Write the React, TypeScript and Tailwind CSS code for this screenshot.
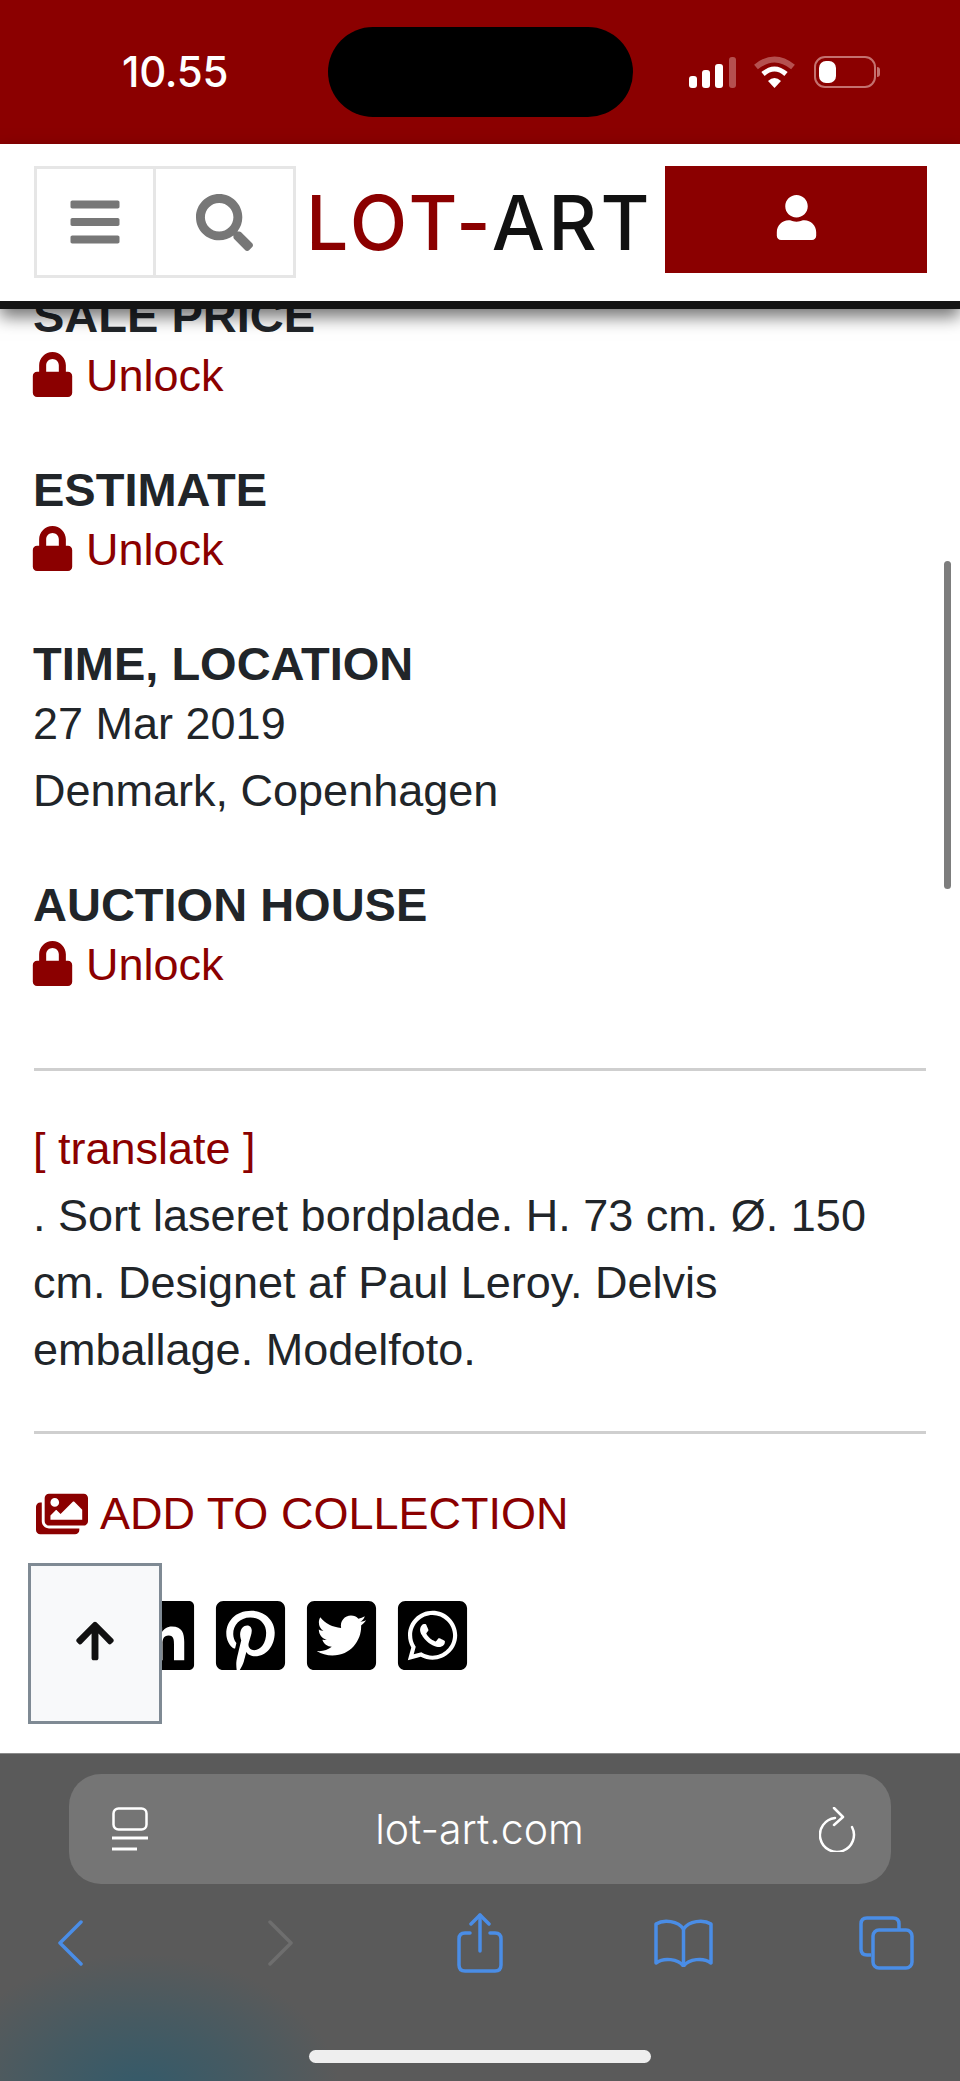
import {
  FaArrowUp,
  FaBars,
  FaFacebookSquare,
  FaImages,
  FaLinkedin,
  FaLock,
  FaPinterestSquare,
  FaSearch,
  FaTwitterSquare,
  FaUser,
  FaWhatsappSquare,
} from "react-icons/fa";

function StatusIcons() {
  return (
    <div className="flex items-center">
      <svg width="47" height="31" viewBox="0 0 47 31" className="block">
        <rect x="0" y="19" width="8" height="12" rx="3" fill="#fff" />
        <rect x="13" y="13" width="8" height="18" rx="3" fill="#fff" />
        <rect x="26" y="7" width="8" height="24" rx="3" fill="#fff" />
        <rect x="40" y="0" width="7" height="31" rx="3" fill="#b5504f" />
      </svg>
      <svg width="41" height="32" viewBox="0 0 41 32" className="ml-[18px] block">
        <path d="M2 11 Q20.5 -4 39 11" fill="none" stroke="#b5504f" strokeWidth="6" />
        <path d="M9 18 Q20.5 8 32 18" fill="none" stroke="#fff" strokeWidth="5" />
        <path d="M14 25 L20.5 32 L27 25 Q20.5 19 14 25 Z" fill="#fff" />
      </svg>
      <div className="ml-[19px] flex items-center">
        <div className="h-[32px] w-[62px] rounded-[11px] border-2 border-[#c4716f] p-[3px]">
          <div className="h-full w-[17px] rounded-[7px] bg-white" />
        </div>
        <div className="ml-px h-[10px] w-[3px] rounded-r-full bg-[#c4716f]" />
      </div>
    </div>
  );
}

function Header() {
  return (
    <header className="relative z-10 shadow-[0_8px_16px_rgba(0,0,0,0.55)]">
      <div className="flex h-[157px] items-start bg-white pl-[34px] pt-[22px]">
        <div className="flex h-[112px] w-[262px] border-[3px] border-[#e6e6e6] text-[#777777]">
          <div className="flex w-[119px] items-center justify-center border-r-[3px] border-[#e6e6e6]">
            <FaBars size={56} />
          </div>
          <div className="flex flex-1 items-center justify-center">
            <FaSearch size={57} />
          </div>
        </div>
        <div className="ml-[10px] mt-[19px] w-[340px] whitespace-nowrap font-['Inter',sans-serif] text-[75px] leading-[76px] font-medium tracking-[3.5px] text-[#111111] blur-[0.6px]">
          <span className="text-[#8b0000]">LOT-</span>ART
        </div>
        <div className="ml-[19px] flex h-[107px] w-[262px] items-center justify-center bg-[#8b0000] pb-[5px] text-white">
          <FaUser size={45} />
        </div>
      </div>
      <div className="h-[8px] bg-[#141414]" />
    </header>
  );
}

function Lock() {
  return (
    <a className="flex items-center text-[#8b0000]">
      <FaLock size={45} className="-ml-[3px] -mt-[2px] shrink-0" />
      <span className="ml-[11px]">Unlock</span>
    </a>
  );
}

function Field({ title, children }: { title: string; children: React.ReactNode }) {
  return (
    <section className="mb-[54px]">
      <h3 className="text-[47px] leading-[53px] font-bold text-[#212529]">{title}</h3>
      {children}
    </section>
  );
}

function Toolbar() {
  return (
    <footer className="h-[328px] border-t border-[#8a8a8a] bg-[#5a5a5a] bg-[radial-gradient(ellipse_200px_140px_at_140px_340px,#335a6a_0%,#455a62_50%,#5a5a5a_100%)] px-[69px] pt-[20px]">
      <div className="flex h-[110px] items-center rounded-[32px] bg-[#757575] pl-[43px] pr-[35px] text-white">
        <svg width="36" height="44" viewBox="0 0 36 44" fill="none" stroke="#fff" className="block">
          <rect x="1.5" y="1.5" width="33" height="21" rx="5" strokeWidth="2.5" />
          <path d="M0 31 H36" strokeWidth="3" />
          <path d="M0 42 H25" strokeWidth="3" />
        </svg>
        <div className="flex-1 pr-[8px] text-center font-['Inter',sans-serif] text-[41px] font-light leading-none">
          lot-art.com
        </div>
        <svg width="37" height="45" viewBox="0 0 37 45" fill="none" stroke="#fff" strokeWidth="2.5" className="block">
          <path d="M16 8 A17 17 0 1 0 33 17" strokeLinecap="round" transform="translate(0 3)" />
          <path d="M15 1 L24 10 L15 18" strokeLinecap="round" strokeLinejoin="round" />
        </svg>
      </div>
      <div className="-ml-[11px] mt-[29px] flex items-center">
        <svg width="25" height="46" viewBox="0 0 25 46" fill="none" stroke="#4a8de6" strokeWidth="3.5" strokeLinecap="round" strokeLinejoin="round" className="block shrink-0">
          <path d="M23 2 L2 23 L23 44" />
        </svg>
        <svg width="25" height="46" viewBox="0 0 25 46" fill="none" stroke="#6e6e6e" strokeWidth="3.5" strokeLinecap="round" strokeLinejoin="round" className="ml-[185px] block shrink-0">
          <path d="M2 2 L23 23 L2 44" />
        </svg>
        <svg width="46" height="60" viewBox="0 0 46 60" fill="none" stroke="#4a8de6" strokeWidth="3.5" strokeLinecap="round" strokeLinejoin="round" className="ml-[164px] block shrink-0">
          <path d="M13 20 H8 Q2 20 2 26 V52 Q2 58 8 58 H38 Q44 58 44 52 V26 Q44 20 38 20 H33" />
          <path d="M23 2 V38" />
          <path d="M14 11 L23 2 L32 11" />
        </svg>
        <svg width="59" height="48" viewBox="0 0 59 48" fill="none" stroke="#4a8de6" strokeWidth="3.5" strokeLinecap="round" strokeLinejoin="round" className="ml-[151px] block shrink-0">
          <path d="M29.5 10 C24 2 10 0 2 5 V44 C10 38 24 40 29.5 47 C35 40 49 38 57 44 V5 C49 0 35 2 29.5 10 Z" />
          <path d="M29.5 10 V47" />
        </svg>
        <svg width="55" height="54" viewBox="0 0 55 54" fill="none" stroke="#4a8de6" strokeWidth="3.5" strokeLinejoin="round" className="ml-[146px] block shrink-0">
          <path d="M12 39 H8 Q2 39 2 33 V8 Q2 2 8 2 H34 Q40 2 40 8 V14" />
          <rect x="14" y="14" width="39" height="38" rx="6" />
        </svg>
      </div>
      <div className="mx-auto mt-[77px] h-[13px] w-[342px] rounded-full bg-[#eeeeee]" />
    </footer>
  );
}

export default function App() {
  return (
    <div className="relative flex h-[2081px] w-[960px] flex-col overflow-hidden bg-white font-['Liberation_Sans',Arial,sans-serif] text-[45px] leading-[67px] text-[#212529]">
      <div className="flex h-[144px] items-center bg-[#8b0000] pl-[122px] text-white">
        <div className="w-[206px] font-['Inter',sans-serif] text-[42px] leading-none font-medium tracking-[-0.3px]">10.55</div>
        <div className="h-[90px] w-[305px] rounded-[45px] bg-black" />
        <div className="ml-[56px]">
          <StatusIcons />
        </div>
      </div>
      <Header />
      <main className="relative flex-1 overflow-hidden px-[33px]">
        <div className="-mt-[20px]">
          <Field title="SALE PRICE">
            <Lock />
          </Field>
          <Field title="ESTIMATE">
            <Lock />
          </Field>
          <Field title="TIME, LOCATION">
            <div>27 Mar 2019</div>
            <div>Denmark, Copenhagen</div>
          </Field>
          <Field title="AUCTION HOUSE">
            <Lock />
          </Field>
          <hr className="mx-px mt-[70px] border-t-[3px] border-[#cfcfcf]" />
          <div className="mt-[44px]">
            <a className="block text-[#8b0000]">[ translate ]</a>
            <p>. Sort laseret bordplade. H. 73 cm. Ø. 150 cm. Designet af Paul Leroy. Delvis emballage. Modelfoto.</p>
          </div>
          <hr className="mx-px mt-[48px] border-t-[3px] border-[#cfcfcf]" />
          <a className="mt-[46px] flex items-center text-[#8b0000]">
            <FaImages size={52} className="ml-[3px]" />
            <span className="ml-[12px]">ADD TO COLLECTION</span>
          </a>
          <div className="-ml-[4px] mt-[49px] flex gap-[12px] text-black">
            <FaFacebookSquare size={79} />
            <FaLinkedin size={79} />
            <FaPinterestSquare size={79} />
            <FaTwitterSquare size={79} />
            <FaWhatsappSquare size={79} />
          </div>
        </div>
        <div className="absolute right-[9px] top-[252px] h-[328px] w-[7px] rounded-full bg-[#7d7d7d]" />
        <button className="absolute bottom-[29px] left-[28px] flex h-[161px] w-[134px] items-center justify-center border-[3px] border-[#7f8a94] bg-[#f8f9fa] pb-[6px] text-[#111111]">
          <FaArrowUp size={44} />
        </button>
      </main>
      <Toolbar />
    </div>
  );
}
